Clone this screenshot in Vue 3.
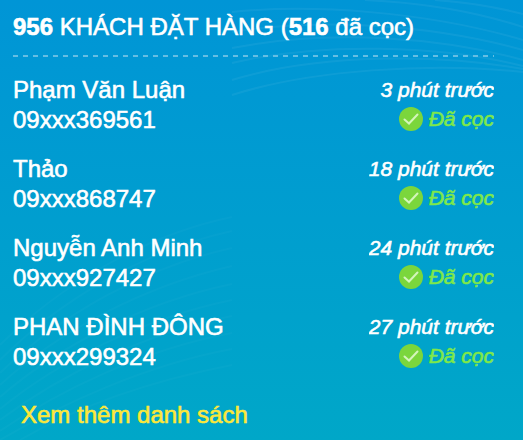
<script setup>
const orders = [
  { name: 'Phạm Văn Luận', phone: '09xxx369561', time: '3 phút trước' },
  { name: 'Thảo', phone: '09xxx868747', time: '18 phút trước' },
  { name: 'Nguyễn Anh Minh', phone: '09xxx927427', time: '24 phút trước' },
  { name: 'PHAN ĐÌNH ĐÔNG', phone: '09xxx299324', time: '27 phút trước' },
]
</script>

<template>
  <main class="panel">
    <svg class="waves" viewBox="0 0 523 440" preserveAspectRatio="none" aria-hidden="true">
      <g class="upper">
        <path d="M232 12C310 4 425 11 523 40" />
        <path d="M365 0C430 3 480 13 523 27" />
        <path d="M435 0Q480 3 523 14" />
        <path d="M232 48C330 29 440 37 523 60" />
        <path d="M232 32C320 18 430 24 523 50" />
        <path d="M232 63C320 42 440 45 523 66" />
        <path d="M232 80C320 53 440 54 523 69" />
        <path d="M232 95C310 70 430 62 523 72" />
      </g>
      <g class="lower">
        <path d="M0 345C60 285 145 235 232 217" />
        <path d="M0 360C60 300 145 250 232 231" />
        <path d="M0 373C60 315 145 267 232 248" />
        <path d="M0 385C60 330 145 286 232 266" />
        <path d="M0 397C60 345 145 302 232 284" />
        <path d="M0 409C60 360 145 318 232 300" />
        <path d="M0 420C60 375 145 333 232 316" />
        <path d="M0 431C60 390 145 349 232 333" />
        <path d="M0 440C60 405 145 365 232 349" />
        <path d="M20 440C80 405 155 380 232 365" />
      </g>
    </svg>
    <div class="content">
      <h1 class="title"><strong>956</strong> KHÁCH ĐẶT HÀNG (<strong>516</strong> đã cọc)</h1>
      <svg class="divider" aria-hidden="true">
        <line x1="0" y1="1" x2="100%" y2="1" />
      </svg>
      <ul class="orders">
        <li v-for="order in orders" :key="order.phone" class="order">
          <div class="customer">
            <div>{{ order.name }}</div>
            <div>{{ order.phone }}</div>
          </div>
          <div class="status">
            <div class="time">{{ order.time }}</div>
            <div class="paid">
              <svg class="check" viewBox="0 0 24 24" aria-hidden="true">
                <circle cx="12" cy="12" r="12" />
                <path d="M5.5 12.5L10 16.5L18.5 7.5" />
              </svg>
              <span>Đã cọc</span>
            </div>
          </div>
        </li>
      </ul>
      <a class="more" href="#">Xem thêm danh sách</a>
    </div>
  </main>
</template>

<style>
body {
  margin: 0;
}
</style>

<style scoped>
.panel {
  position: relative;
  box-sizing: border-box;
  min-height: 100vh;
  overflow: hidden;
  padding: 12px 29px 8px 13px;
  background: linear-gradient(#0095d6, #00a7c8);
  color: #fff;
  font-family: "Liberation Sans", Arial, sans-serif;
  font-size: 24px;
  line-height: 30px;
  -webkit-text-stroke: 0.6px currentColor;
}
.waves {
  position: absolute;
  inset: 0;
  width: 100%;
  height: 100%;
  fill: none;
  stroke: #fff;
  stroke-width: 2;
}
.upper {
  opacity: 0.05;
}
.lower {
  opacity: 0.02;
}
.content {
  position: relative;
}
.title {
  margin: 0;
  font-size: 24px;
  font-weight: 400;
  white-space: nowrap;
}
.divider {
  display: block;
  width: 100%;
  height: 2px;
  margin: 13px 0 18px;
}
.divider line {
  stroke: #65bee3;
  stroke-width: 2;
  stroke-dasharray: 5 5;
}
.orders {
  display: grid;
  gap: 19px;
  margin: 0;
  padding: 0;
  list-style: none;
}
.order {
  display: flex;
  justify-content: space-between;
}
.status {
  display: flex;
  flex-direction: column;
  align-items: flex-end;
  overflow: hidden;
  font-size: 21px;
  font-style: italic;
  line-height: 29px;
  white-space: nowrap;
}
.paid {
  display: flex;
  align-items: center;
  gap: 6px;
  color: #7fe849;
}
.check {
  width: 24px;
  height: 24px;
}
.check circle {
  fill: #7bd63c;
}
.check path {
  fill: none;
  stroke: #d5f5bb;
  stroke-width: 2;
  stroke-linecap: round;
}
.more {
  display: inline-block;
  margin: 28px 0 0 8px;
  color: #fce83a;
  text-decoration: none;
}
</style>
